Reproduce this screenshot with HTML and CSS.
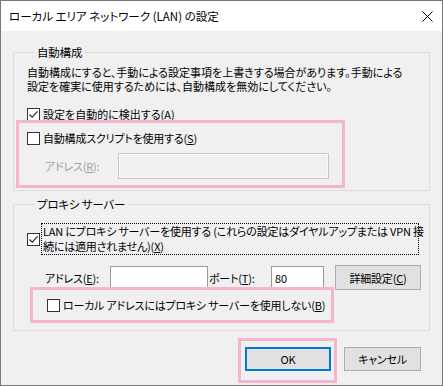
FILE: index.html
```html
<!DOCTYPE html>
<html lang="ja">
<head>
<meta charset="utf-8">
<title>ローカル エリア ネットワーク (LAN) の設定</title>
<link rel="stylesheet" href="styles.css">
</head>
<body>
<div class="window">
  <div class="titlebar">
    <span class="title">ローカル エリア ネットワーク (LAN) の設定</span>
    <svg class="close" width="11" height="11" viewBox="0 0 11 11"><path d="M0.5 0.5 L10.5 10.5 M10.5 0.5 L0.5 10.5" stroke="#000" stroke-width="1" fill="none"/></svg>
  </div>
  <div class="content">
    <fieldset class="group g1">
      <legend>自動構成</legend>
      <p class="desc">自動構成にすると、手動による設定事項を上書きする場合があります。手動による<br>設定を確実に使用するためには、自動構成を無効にしてください。</p>
      <label class="check detect">
        <span class="box"><svg width="11" height="11" viewBox="0 0 11 11"><path d="M1.5 5.5 L4.2 8.2 L9.6 2.3" stroke="#222" stroke-width="1.1" fill="none"/></svg></span>
        <span class="ctext">設定を自動的に検出する(<u>A</u>)</span>
      </label>
      <label class="check script">
        <span class="box"></span>
        <span class="ctext">自動構成スクリプトを使用する(<u>S</u>)</span>
      </label>
      <div class="field">
        <span class="flabel disabled">アドレス(<u>R</u>):</span>
        <span class="input input-disabled"></span>
      </div>
    </fieldset>
    <fieldset class="group g2">
      <legend>プロキシ サーバー</legend>
      <label class="check proxy">
        <span class="box"><svg width="11" height="11" viewBox="0 0 11 11"><path d="M1.5 5.5 L4.2 8.2 L9.6 2.3" stroke="#222" stroke-width="1.1" fill="none"/></svg></span>
        <span class="ctext focus">LAN にプロキシ サーバーを使用する (これらの設定はダイヤルアップまたは VPN 接<br>続には適用されません)(<u>X</u>)</span>
      </label>
      <div class="addr-row">
        <span class="alabel">アドレス(<u>E</u>):</span>
        <span class="input addr"></span>
        <span class="plabel">ポート(<u>T</u>):</span>
        <span class="input port">80</span>
        <span class="btn advanced">詳細設定(<u>C</u>)</span>
      </div>
      <label class="check bypass">
        <span class="box"></span>
        <span class="ctext">ローカル アドレスにはプロキシ サーバーを使用しない(<u>B</u>)</span>
      </label>
    </fieldset>
    <div class="actions">
      <span class="btn ok">OK</span>
      <span class="btn cancel">キャンセル</span>
    </div>
  </div>
  <div class="hl hl-script"></div>
  <div class="hl hl-bypass"></div>
  <div class="hl hl-ok"></div>
</div>
</body>
</html>
```

FILE: styles.css
```css
* { box-sizing: border-box; }
html, body { margin: 0; padding: 0; }
body {
  font-family: "Noto Sans CJK JP", "Noto Sans", sans-serif;
  font-size: 11px;
  letter-spacing: -0.2px;
  color: #000;
  background: #f0f0f0;
  font-feature-settings: "palt";
}
.window {
  position: relative;
  width: 443px;
  height: 386px;
  border: 1px solid #777;
  background: #f0f0f0;
  display: flex;
  flex-direction: column;
}
.titlebar {
  height: 30px;
  background: #fff;
  display: flex;
  align-items: center;
  justify-content: space-between;
  padding: 0 9px 0 8px;
  flex: none;
}
.title { line-height: 16px; font-size: 11.5px; letter-spacing: 0; }
.close { display: block; }
.content {
  padding: 13px 12px 0 12px;
  flex: 1;
  display: flex;
  flex-direction: column;
}
.group {
  margin: 0;
  border: 1px solid #dcdcdc;
  padding: 0 12px 0 13px;
  min-width: 0;
}
.group legend {
  padding: 0 3px;
  margin-left: 7px;
  line-height: 16px;
  font-size: 11.5px;
}
.g1 { padding-bottom: 11px; }
.g2 { margin-top: 5px; padding-bottom: 17px; }
.desc {
  margin: 5px 0 0;
  line-height: 14px;
  white-space: nowrap;
  letter-spacing: 0;
}
.check {
  display: flex;
  align-items: center;
  line-height: 16px;
}
.box {
  width: 13px;
  height: 13px;
  border: 1px solid #333;
  background: #fff;
  flex: none;
  display: flex;
  align-items: center;
  justify-content: center;
}
.box svg { display: block; }
.ctext { margin-left: 3px; white-space: nowrap; }
u { text-decoration: underline; text-underline-offset: 1px; }
.detect { margin-top: 13px; }
.detect .ctext { letter-spacing: 0; }
.script { margin-top: 8px; }
.field {
  display: flex;
  align-items: center;
  margin-top: 7px;
}
.flabel { margin-left: 18px; width: 73px; }
.disabled { color: #a0a0a0; }
.input {
  height: 23px;
  background: #fff;
  border: 1px solid #9a9a9a;
  display: flex;
  align-items: center;
  padding-left: 3px;
  line-height: 16px;
  flex: none;
}
.input-disabled {
  width: 211px;
  height: 26px;
  background: #f0f0f0;
  border-color: #c6c6c6;
  box-shadow: inset 0 0 0 1px #fbfbfb;
}
.proxy { margin-top: 11px; }
.proxy .ctext { margin-left: 1px; }
.focus {
  border: 1px dotted #000;
  line-height: 15px;
  padding: 0 0 0 1px;
  width: 378px;
}
.addr-row {
  display: flex;
  align-items: center;
  margin-top: 10px;
  height: 25px;
}
.alabel { margin-left: 18px; width: 65px; flex: none; }
.addr { width: 98px; }
.plabel { width: 63px; padding-left: 1px; flex: none; }
.port { width: 53px; }
.btn {
  display: flex;
  align-items: center;
  justify-content: center;
  height: 24px;
  background: #e1e1e1;
  border: 1px solid #adadad;
  line-height: 16px;
  flex: none;
}
.advanced { margin-left: 11px; width: 86px; height: 25px; }
.bypass { margin-top: 7px; margin-left: 20px; }
.actions {
  display: flex;
  justify-content: flex-end;
  gap: 13px;
  margin-top: 16px;
  padding-right: 9px;
}
.ok { width: 86px; border: 2px solid #0078d7; }
.cancel { width: 77px; }
.hl {
  position: absolute;
  border: 3px solid #f5b5cc;
  pointer-events: none;
}
.hl-script { left: 15px; top: 119px; width: 329px; height: 68px; }
.hl-bypass { left: 29px; top: 286px; width: 304px; height: 36px; }
.hl-ok { left: 237px; top: 337px; width: 99px; height: 45px; }
```
